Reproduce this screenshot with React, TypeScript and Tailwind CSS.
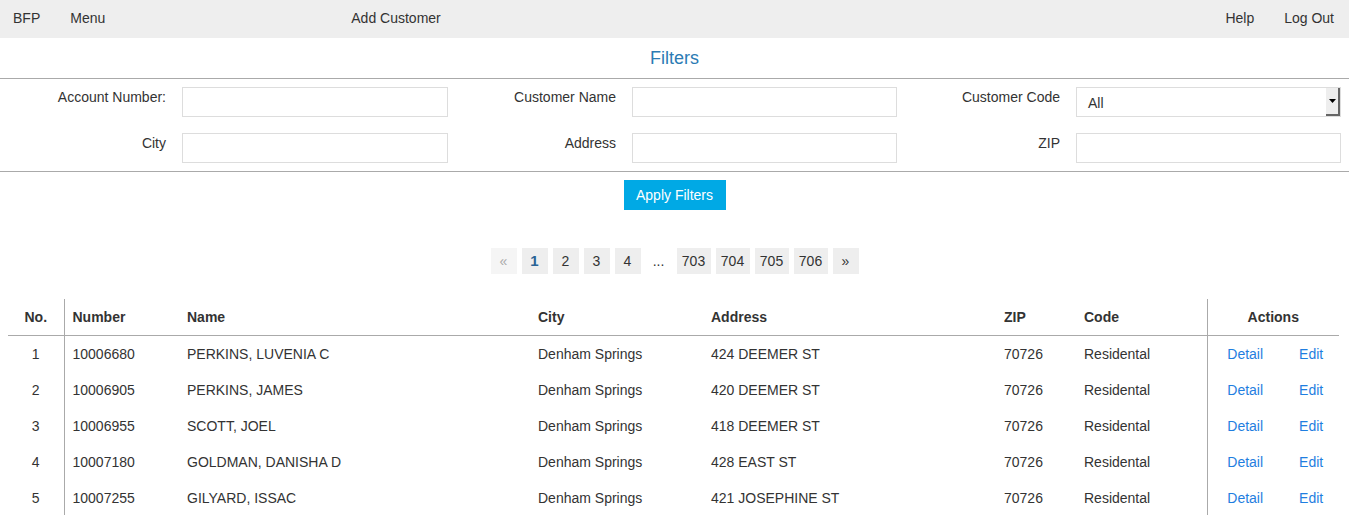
import React from 'react'

const rows = [
  { no: 1, number: '10006680', name: 'PERKINS, LUVENIA C', city: 'Denham Springs', address: '424 DEEMER ST', zip: '70726', code: 'Residental' },
  { no: 2, number: '10006905', name: 'PERKINS, JAMES', city: 'Denham Springs', address: '420 DEEMER ST', zip: '70726', code: 'Residental' },
  { no: 3, number: '10006955', name: 'SCOTT, JOEL', city: 'Denham Springs', address: '418 DEEMER ST', zip: '70726', code: 'Residental' },
  { no: 4, number: '10007180', name: 'GOLDMAN, DANISHA D', city: 'Denham Springs', address: '428 EAST ST', zip: '70726', code: 'Residental' },
  { no: 5, number: '10007255', name: 'GILYARD, ISSAC', city: 'Denham Springs', address: '421 JOSEPHINE ST', zip: '70726', code: 'Residental' },
]

function Field({ label, width = 'w-[266px]' }: { label: string; width?: string }) {
  return (
    <div className="flex items-start">
      <label className="w-[166px] shrink-0 text-right leading-5">{label}</label>
      <input className={`ml-4 h-[30px] shrink-0 ${width} border border-[#dddddd] bg-white outline-none`} />
    </div>
  )
}

function PageBtn({ children, active = false, muted = false, wide = false }: { children: React.ReactNode; active?: boolean; muted?: boolean; wide?: boolean }) {
  return (
    <span
      className={`flex h-[26px] items-center justify-center ${wide ? 'w-[34px]' : 'w-[26px]'} ${
        muted ? 'bg-[#f5f5f5] text-[#aaaaaa]' : 'bg-[#eeeeee]'
      } ${active ? 'font-bold text-[15px] text-[#2a6496]' : ''}`}
    >
      {children}
    </span>
  )
}

export default function App() {
  return (
    <div className="min-h-[515px] bg-white text-[14px] text-[#333333]" style={{ fontFamily: '"Liberation Sans", Arial, sans-serif' }}>
      {/* Top nav */}
      <nav className="flex h-[38px] items-center bg-[#eeeeee] pb-[2px]">
        <a className="ml-[13px]">BFP</a>
        <a className="ml-[30px]">Menu</a>
        <a className="ml-[246px]">Add Customer</a>
        <div className="ml-auto mr-[15px] flex gap-[30px]">
          <a>Help</a>
          <a>Log Out</a>
        </div>
      </nav>

      {/* Filters */}
      <h2 className="flex h-[41px] items-center justify-center border-b border-[#aaaaaa] text-[18px] text-[#2b7bb4]">
        Filters
      </h2>
      <div className="grid grid-cols-[450px_444px_1fr] gap-y-4 border-b border-[#aaaaaa] pt-[8px] pb-[8px]">
        <Field label="Account Number:" />
        <Field label="Customer Name" width="w-[265px]" />
        <div className="flex items-start">
          <label className="w-[166px] shrink-0 text-right leading-5">Customer Code</label>
          <div className="ml-4 flex h-[30px] w-[265px] shrink-0 items-center border border-[#dddddd] bg-white">
            <span className="ml-[11px] flex-1 pt-[2px]">All</span>
            <span className="flex h-full w-[14px] items-center justify-center border-r-2 border-b-2 border-[#666666] bg-[#eeeeee]">
              <svg width="7" height="4" viewBox="0 0 7 4">
                <path d="M0 0h7L3.5 4z" fill="#000" />
              </svg>
            </span>
          </div>
        </div>
        <Field label="City" />
        <Field label="Address" width="w-[265px]" />
        <Field label="ZIP" width="w-[265px]" />
      </div>

      <div className="flex justify-center pt-[8px]">
        <button className="h-[30px] w-[102px] bg-[#00a9e5] text-white">Apply Filters</button>
      </div>

      {/* Pagination */}
      <div className="mt-[38px] flex justify-center gap-[5px]">
        <PageBtn muted>«</PageBtn>
        <PageBtn active>1</PageBtn>
        <PageBtn>2</PageBtn>
        <PageBtn>3</PageBtn>
        <PageBtn>4</PageBtn>
        <span className="flex h-[26px] w-[26px] items-center justify-center">...</span>
        <PageBtn wide>703</PageBtn>
        <PageBtn wide>704</PageBtn>
        <PageBtn wide>705</PageBtn>
        <PageBtn wide>706</PageBtn>
        <PageBtn>»</PageBtn>
      </div>

      {/* Table */}
      <div className="mt-[25px] px-[8px] pr-[10px]">
        <table className="w-full border-collapse">
          <colgroup>
            <col className="w-[56px]" />
            <col className="w-[114px]" />
            <col className="w-[351px]" />
            <col className="w-[173px]" />
            <col className="w-[293px]" />
            <col className="w-[80px]" />
            <col className="w-[132px]" />
            <col className="w-[132px]" />
          </colgroup>
          <thead>
            <tr className="h-[36px] border-b border-[#aaaaaa] font-bold">
              <th className="pt-[2px] text-center">No.</th>
              <th className="border-l border-[#aaaaaa] pt-[2px] pl-[8px] text-left">Number</th>
              <th className="pt-[2px] pl-[9px] text-left">Name</th>
              <th className="pt-[2px] pl-[9px] text-left">City</th>
              <th className="pt-[2px] pl-[9px] text-left">Address</th>
              <th className="pt-[2px] pl-[9px] text-left">ZIP</th>
              <th className="pt-[2px] pl-[9px] text-left">Code</th>
              <th className="border-l border-[#aaaaaa] pt-[2px] text-center">Actions</th>
            </tr>
          </thead>
          <tbody>
            {rows.map((r) => (
              <tr key={r.no} className="h-[36px]">
                <td className="pt-[2px] text-center">{r.no}</td>
                <td className="border-l border-[#aaaaaa] pt-[2px] pl-[8px]">{r.number}</td>
                <td className="pt-[2px] pl-[9px]">{r.name}</td>
                <td className="pt-[2px] pl-[9px]">{r.city}</td>
                <td className="pt-[2px] pl-[9px]">{r.address}</td>
                <td className="pt-[2px] pl-[9px]">{r.zip}</td>
                <td className="pt-[2px] pl-[9px]">{r.code}</td>
                <td className="border-l border-[#aaaaaa] pt-[2px]">
                  <div className="flex justify-center gap-[36px] pl-[4px] text-[#1f7ee0]">
                    <a>Detail</a>
                    <a>Edit</a>
                  </div>
                </td>
              </tr>
            ))}
          </tbody>
        </table>
      </div>
    </div>
  )
}
